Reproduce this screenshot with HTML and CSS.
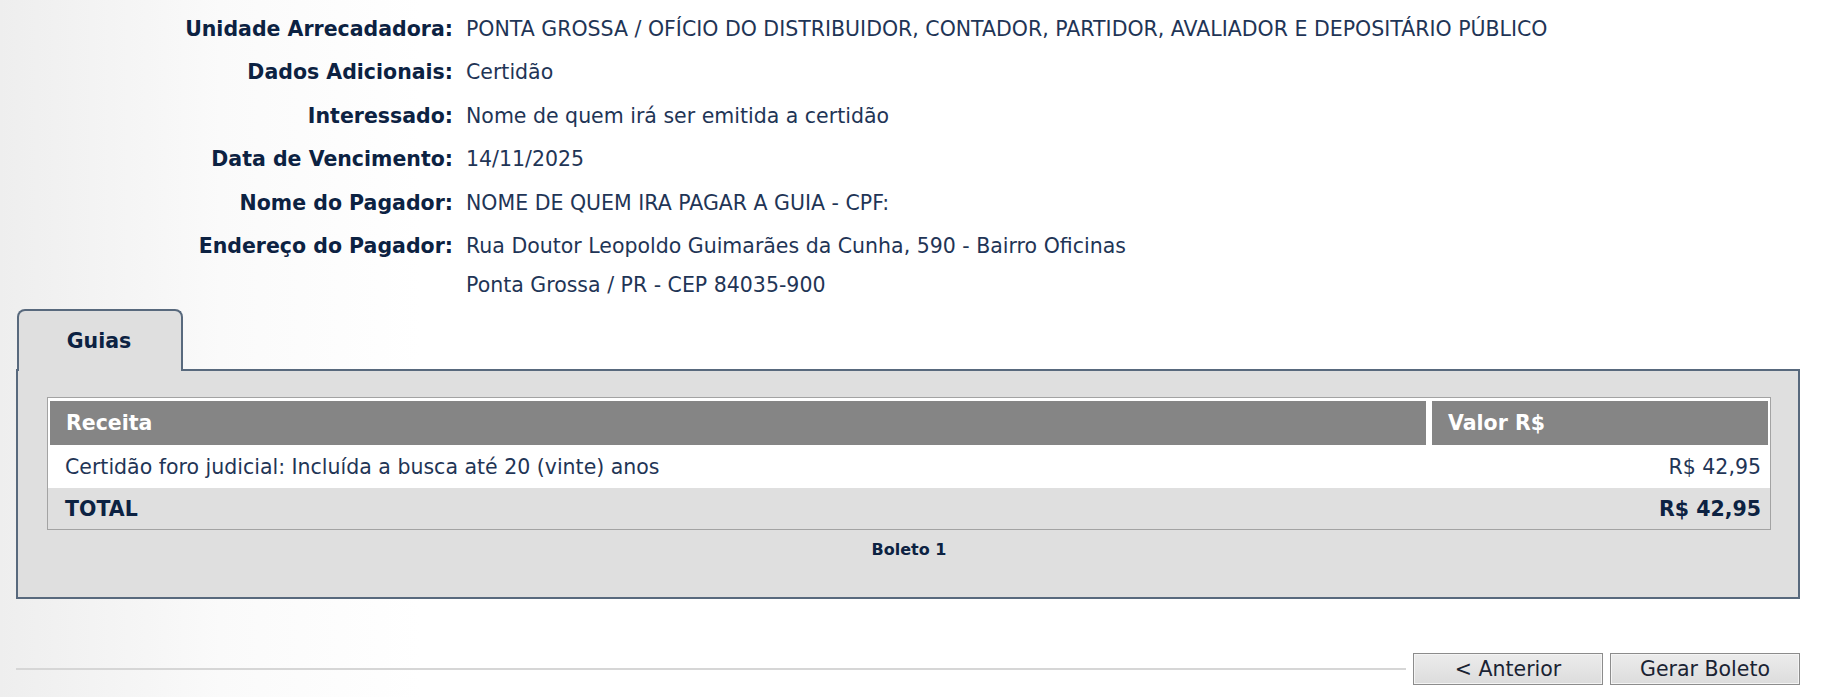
FILE: index.html
```html
<!DOCTYPE html>
<html lang="pt-BR">
<head>
<meta charset="utf-8">
<title>Guias</title>
<link rel="stylesheet" href="styles.css">
</head>
<body>
<div class="page">
  <div class="info">
    <div class="label">Unidade Arrecadadora:</div>
    <div class="value">PONTA GROSSA / OFÍCIO DO DISTRIBUIDOR, CONTADOR, PARTIDOR, AVALIADOR E DEPOSITÁRIO PÚBLICO</div>
    <div class="label">Dados Adicionais:</div>
    <div class="value">Certidão</div>
    <div class="label">Interessado:</div>
    <div class="value">Nome de quem irá ser emitida a certidão</div>
    <div class="label">Data de Vencimento:</div>
    <div class="value">14/11/2025</div>
    <div class="label">Nome do Pagador:</div>
    <div class="value">NOME DE QUEM IRA PAGAR A GUIA - CPF:</div>
    <div class="label">Endereço do Pagador:</div>
    <div class="value">Rua Doutor Leopoldo Guimarães da Cunha, 590 - Bairro Oficinas<div class="addr2">Ponta Grossa / PR - CEP 84035-900</div></div>
  </div>

  <div class="tabs">
    <div class="tab">Guias</div>
  </div>
  <div class="panel">
    <div class="grid">
      <div class="grid-head">
        <div class="hcell">Receita</div>
        <div class="hcell">Valor R$</div>
      </div>
      <div class="grid-row">
        <div class="cell">Certidão foro judicial: Incluída a busca até 20 (vinte) anos</div>
        <div class="cell num">R$ 42,95</div>
      </div>
      <div class="grid-row total">
        <div class="cell">TOTAL</div>
        <div class="cell num">R$ 42,95</div>
      </div>
    </div>
    <div class="boleto">Boleto 1</div>
  </div>

  <div class="footer">
    <div class="rule"></div>
    <button class="btn" type="button">&lt; Anterior</button>
    <button class="btn" type="button">Gerar Boleto</button>
  </div>
</div>
</body>
</html>
```

FILE: styles.css
```css
html, body {
  margin: 0;
  padding: 0;
}
body {
  background: linear-gradient(to right, #eeeeee 0px, #fafafa 220px, #ffffff 420px);
  font-family: "DejaVu Sans", Verdana, sans-serif;
  font-size: 20.5px;
  color: #1e3150;
  min-height: 697px;
}
.page {
  width: 1784px;
  margin-left: 16px;
  padding-top: 7px;
}
.info {
  display: grid;
  grid-template-columns: 453px auto;
  column-gap: 13px;
  margin-left: -16px;
}
.label, .value {
  line-height: 24px;
  padding: 9.75px 0;
}
.label {
  text-align: right;
  font-weight: bold;
  color: #0c2242;
}
.value {
  color: #1f3556;
}
.addr2 {
  margin-top: 15px;
}
.tabs {
  display: flex;
  margin-top: 2px;
  padding-left: 1px;
}
.tab {
  position: relative;
  z-index: 1;
  width: 160px;
  height: 60px;
  margin-bottom: -2px;
  box-sizing: content-box;
  border: 2px solid #58697d;
  border-bottom: none;
  border-radius: 8px 8px 0 0;
  background: #dfdfdf;
  font-weight: bold;
  color: #0c2242;
  text-align: center;
  line-height: 60px;
  padding-right: 2px;
}
.panel {
  border: 2px solid #58697d;
  background: #dfdfdf;
  padding: 26px 27px 0 29px;
  height: 200px;
}
.grid {
  border: 1px solid #a3a3a3;
  background: #ffffff;
}
.grid-head {
  display: grid;
  grid-template-columns: 1fr 336px;
  column-gap: 6px;
  padding: 3px 2px 0 2px;
}
.hcell {
  background: #858585;
  color: #ffffff;
  font-weight: bold;
  height: 44px;
  line-height: 44px;
  padding-left: 16px;
}
.grid-row {
  display: flex;
  justify-content: space-between;
  align-items: center;
  height: 43px;
  padding: 0 9px 0 17px;
  color: #1f3556;
}
.grid-row.total {
  background: #dfdfdf;
  font-weight: bold;
  color: #0c2242;
  height: 41px;
}
.boleto {
  text-align: center;
  font-weight: bold;
  font-size: 16px;
  color: #0c2242;
  margin-top: 10px;
}
.footer {
  display: flex;
  align-items: center;
  margin-top: 54px;
  gap: 6px;
}
.rule {
  flex: 1;
  height: 2px;
  background: #d6d6d6;
}
.btn {
  width: 190px;
  height: 32px;
  margin-left: 1px;
  border: 1px solid #8c8c8c;
  box-shadow: inset 0 0 0 1px #f4f4f4;
  background: linear-gradient(#ececec, #dcdcdc);
  font-family: "DejaVu Sans", Verdana, sans-serif;
  font-size: 20.5px;
  color: #1a2333;
  padding: 0;
}
```
